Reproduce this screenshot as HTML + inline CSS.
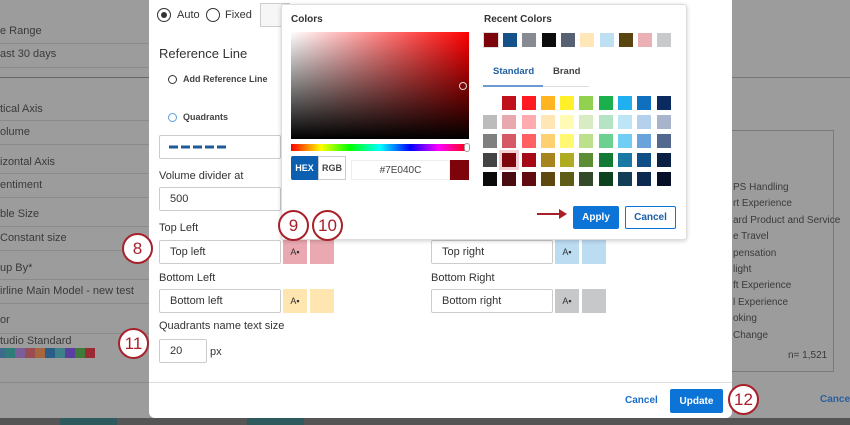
<!DOCTYPE html>
<html><head><meta charset="utf-8"><style>
*{box-sizing:border-box;margin:0;padding:0}
body{width:850px;height:425px;overflow:hidden;background:#9c9c9c;font-family:"Liberation Sans",sans-serif;position:relative;color:#333}
.a{position:absolute}
.t{position:absolute;font-size:11px;white-space:nowrap}
.g{color:#3a3a3a}
.hl{position:absolute;height:1px;background:#8a8a8a}
.inp{position:absolute;background:#fff;border:1px solid #ccc;border-radius:2px;font-size:11px;padding-left:10px;display:flex;align-items:center;color:#333}
.circ{position:absolute;width:31px;height:31px;border-radius:50%;border:2.5px solid #a8202a;background:#fff;color:#a8202a;font-size:17px;display:flex;align-items:center;justify-content:center}
.sw{position:absolute;width:14px;height:14px}
.btn{position:absolute;width:24px;height:24px;font-size:9px;display:flex;align-items:center;justify-content:center;color:#333}
</style></head><body>
<div class="t g" style="left:0;top:25px">e Range</div>
<div class="hl" style="left:0;top:43px;width:149px"></div>
<div class="t g" style="left:0;top:48px">ast 30 days</div>
<div class="hl" style="left:0;top:67px;width:149px"></div>
<div class="hl" style="left:0;top:77px;width:149px;background:#666"></div>
<div class="t g" style="left:0;top:103px">tical Axis</div>
<div class="hl" style="left:0;top:120px;width:149px"></div>
<div class="t g" style="left:0;top:126px">olume</div>
<div class="hl" style="left:0;top:144px;width:149px"></div>
<div class="t g" style="left:0;top:156px">izontal Axis</div>
<div class="hl" style="left:0;top:173px;width:149px"></div>
<div class="t g" style="left:0;top:179px">entiment</div>
<div class="hl" style="left:0;top:197px;width:149px"></div>
<div class="t g" style="left:0;top:208px">ble Size</div>
<div class="hl" style="left:0;top:226px;width:149px"></div>
<div class="t g" style="left:0;top:232px">Constant size</div>
<div class="hl" style="left:0;top:250px;width:149px"></div>
<div class="t g" style="left:0;top:262px">up By*</div>
<div class="hl" style="left:0;top:279px;width:149px"></div>
<div class="t g" style="left:0;top:285px">irline Main Model - new test</div>
<div class="hl" style="left:0;top:303px;width:149px"></div>
<div class="t g" style="left:0;top:314px">or</div>
<div class="hl" style="left:0;top:333px;width:149px"></div>
<div class="t g" style="left:0;top:335px">tudio Standard</div>
<div class="a" style="left:0;top:348px;display:flex">
<div style="width:5px;height:10px;background:#3e6a8a"></div><div style="width:10px;height:10px;background:#2e7b78"></div><div style="width:10px;height:10px;background:#7a5e9a"></div><div style="width:10px;height:10px;background:#9a4c52"></div><div style="width:10px;height:10px;background:#a8663e"></div><div style="width:10px;height:10px;background:#2a5e86"></div><div style="width:10px;height:10px;background:#3e8088"></div><div style="width:10px;height:10px;background:#5a3ea0"></div><div style="width:10px;height:10px;background:#3e7a3a"></div><div style="width:10px;height:10px;background:#9a2a34"></div></div>
<div class="hl" style="left:0;top:382px;width:149px"></div>
<div class="hl" style="left:732px;top:77px;width:118px;background:#777"></div>
<div class="a" style="left:700px;top:130px;width:134px;height:242px;border:1px solid #7a7a7a"></div>
<div class="a" style="left:733px;top:180px;font-size:10px;line-height:16.4px;color:#3a3a3a">PS Handling<br>rt Experience<br>ard Product and Service<br>e Travel<br>pensation<br>light<br>ft Experience<br>l Experience<br>oking<br>Change</div>
<div class="t g" style="left:788px;top:350px;font-size:10px">n= 1,521</div>
<div class="t" style="left:820px;top:394px;color:#2a5ea0;font-weight:bold;font-size:10px">Cancel</div>
<div class="a" style="left:0;top:418px;width:850px;height:7px;background:#555"></div>
<div class="a" style="left:60px;top:418px;width:57px;height:7px;background:#2e5a5e"></div>
<div class="a" style="left:247px;top:418px;width:57px;height:7px;background:#2e5a5e"></div>
<div class="a" style="left:149px;top:0;width:583px;height:418px;background:#fff;border-radius:0 0 6px 6px"></div>
<div class="a" style="left:157px;top:8px;width:14px;height:14px;border-radius:50%;border:1.5px solid #333"></div>
<div class="a" style="left:161px;top:12px;width:6px;height:6px;border-radius:50%;background:#333"></div>
<div class="t" style="left:177px;top:9px">Auto</div>
<div class="a" style="left:206px;top:8px;width:14px;height:14px;border-radius:50%;border:1.5px solid #333"></div>
<div class="t" style="left:225px;top:9px">Fixed</div>
<div class="a" style="left:260px;top:3px;width:30px;height:24px;border:1px solid #ccc;background:#f6f6f6"></div>
<div class="t" style="left:159px;top:46px;font-size:13px">Reference Line</div>
<div class="a" style="left:168px;top:75px;width:9px;height:9px;border-radius:50%;border:1px solid #333"></div>
<div class="t" style="left:183px;top:74px;font-size:9px;font-weight:bold;color:#444">Add Reference Line</div>
<div class="a" style="left:168px;top:113px;width:9px;height:9px;border-radius:50%;border:1px solid #5aa0e0"></div>
<div class="t" style="left:183px;top:112px;font-size:9px;font-weight:bold;color:#444">Quadrants</div>
<div class="inp" style="left:159px;top:135px;width:122px;height:24px;padding-left:9px"><svg width="60" height="4"><line x1="0" y1="2" x2="60" y2="2" stroke="#1f5a96" stroke-width="3" stroke-dasharray="9,3"/></svg></div>
<div class="t" style="left:159px;top:170px">Volume divider at</div>
<div class="inp" style="left:159px;top:187px;width:122px;height:24px">500</div>
<div class="t" style="left:159px;top:222px">Top Left</div>
<div class="inp" style="left:159px;top:240px;width:122px;height:24px">Top left</div>
<div class="btn" style="left:283px;top:240px;background:#eaa8b0">A▪</div>
<div class="a" style="left:310px;top:240px;width:24px;height:24px;background:#eaa8b0"></div>
<div class="t" style="left:159px;top:272px">Bottom Left</div>
<div class="inp" style="left:159px;top:289px;width:122px;height:24px">Bottom left</div>
<div class="btn" style="left:283px;top:289px;background:#ffe5b0">A▪</div>
<div class="a" style="left:310px;top:289px;width:24px;height:24px;background:#ffe5b0"></div>
<div class="t" style="left:159px;top:320px">Quadrants name text size</div>
<div class="inp" style="left:159px;top:339px;width:48px;height:24px">20</div>
<div class="t" style="left:210px;top:346px">px</div>
<div class="t" style="left:431px;top:272px">Bottom Right</div>
<div class="inp" style="left:431px;top:240px;width:122px;height:24px">Top right</div>
<div class="btn" style="left:555px;top:240px;background:#bcdcf2">A▪</div>
<div class="a" style="left:582px;top:240px;width:24px;height:24px;background:#bcdcf2"></div>
<div class="inp" style="left:431px;top:289px;width:122px;height:24px">Bottom right</div>
<div class="btn" style="left:555px;top:289px;background:#c6c8ca">A▪</div>
<div class="a" style="left:582px;top:289px;width:24px;height:24px;background:#c6c8ca"></div>
<div class="a" style="left:149px;top:382px;width:583px;height:1px;background:#ddd"></div>
<div class="t" style="left:625px;top:395px;color:#1a6ec8;font-weight:bold;font-size:10px">Cancel</div>
<div class="a" style="left:670px;top:389px;width:53px;height:24px;background:#0b74d6;border-radius:2px;color:#fff;font-size:10px;font-weight:bold;display:flex;align-items:center;justify-content:center">Update</div>
<div class="a" style="left:281px;top:4px;width:406px;height:236px;background:#fff;border:1px solid #ddd;border-radius:3px;box-shadow:0 1px 4px rgba(0,0,0,.2)"></div>
<div class="t" style="left:291px;top:14px;font-size:10px;font-weight:bold">Colors</div>
<div class="a" style="left:291px;top:32px;width:178px;height:107px;background:linear-gradient(to top,#000,rgba(0,0,0,0)),linear-gradient(to right,#fff,#f00)"></div>
<div class="a" style="left:459px;top:82px;width:8px;height:8px;border-radius:50%;border:1px solid #ddd"></div>
<div class="a" style="left:291px;top:144px;width:178px;height:7px;background:linear-gradient(to right,#f00,#ff0 17%,#0f0 33%,#0ff 50%,#00f 67%,#f0f 83%,#f00)"></div>
<div class="a" style="left:464px;top:143px;width:6px;height:9px;border-radius:3px;background:#fff;border:1px solid #999"></div>
<div class="a" style="left:291px;top:156px;width:27px;height:24px;background:#0b5fb0;color:#fff;font-size:9px;font-weight:bold;display:flex;align-items:center;justify-content:center;border-radius:2px 0 0 2px">HEX</div>
<div class="a" style="left:318px;top:156px;width:28px;height:24px;border:1px solid #ccc;font-size:9px;font-weight:bold;display:flex;align-items:center;justify-content:center;color:#444">RGB</div>
<div class="a" style="left:351px;top:160px;width:99px;height:20px;border:1px solid #eee;font-size:10px;display:flex;align-items:center;justify-content:center;color:#444">#7E040C</div>
<div class="a" style="left:450px;top:160px;width:19px;height:20px;background:#7e040c"></div>
<div class="t" style="left:484px;top:14px;font-size:10px;font-weight:bold">Recent Colors</div>
<div class="sw" style="left:484px;top:33px;background:#7e040c;outline:1px solid #ddd"></div>
<div class="sw" style="left:503px;top:33px;background:#165289"></div>
<div class="sw" style="left:522px;top:33px;background:#878a90"></div>
<div class="sw" style="left:542px;top:33px;background:#0c0c0c"></div>
<div class="sw" style="left:561px;top:33px;background:#566171"></div>
<div class="sw" style="left:580px;top:33px;background:#ffe7ba"></div>
<div class="sw" style="left:600px;top:33px;background:#bfdff2"></div>
<div class="sw" style="left:619px;top:33px;background:#5a4410"></div>
<div class="sw" style="left:638px;top:33px;background:#ebb0b6"></div>
<div class="sw" style="left:657px;top:33px;background:#c8c9cb"></div>
<div class="t" style="left:493px;top:66px;font-size:9.5px;font-weight:bold;color:#1f5fa0">Standard</div>
<div class="t" style="left:553px;top:66px;font-size:9.5px;font-weight:bold;color:#444">Brand</div>
<div class="a" style="left:483px;top:86px;width:106px;height:1px;background:#ddd"></div>
<div class="a" style="left:483px;top:85px;width:60px;height:2px;background:#6a9ad0"></div>
<div class="a" style="left:483px;top:96px;display:grid;grid-template-columns:repeat(10,14px);column-gap:5.3px;row-gap:5px">
<div></div><div style="height:14px;background:#c0101c"></div><div style="background:#ff1a22"></div><div style="background:#ffb422"></div><div style="background:#fff02a"></div><div style="background:#92d050"></div><div style="background:#1bb04c"></div><div style="background:#20b0f0"></div><div style="background:#1070c0"></div><div style="background:#0a2a60"></div>
<div style="height:14px;background:#bcbcbc"></div><div style="background:#e8a8ae"></div><div style="background:#ffaaae"></div><div style="background:#ffe6b4"></div><div style="background:#fffab4"></div><div style="background:#d8ecc4"></div><div style="background:#b4e4c4"></div><div style="background:#bce6f8"></div><div style="background:#b4d0ec"></div><div style="background:#a8b4cc"></div>
<div style="height:14px;background:#808080"></div><div style="background:#d65a66"></div><div style="background:#ff6064"></div><div style="background:#ffd070"></div><div style="background:#fff870"></div><div style="background:#bce08c"></div><div style="background:#6cd090"></div><div style="background:#70cef4"></div><div style="background:#6aa2dc"></div><div style="background:#52688e"></div>
<div style="height:14px;background:#444"></div><div style="background:#7e040c;outline:3px solid #f2d0d4"></div><div style="background:#a60a16"></div><div style="background:#a88420"></div><div style="background:#b0ac20"></div><div style="background:#5c8c34"></div><div style="background:#137a36"></div><div style="background:#1a78a4"></div><div style="background:#104e86"></div><div style="background:#0a2044"></div>
<div style="height:14px;background:#0a0a0a"></div><div style="background:#4a0c10"></div><div style="background:#600a12"></div><div style="background:#5e4810"></div><div style="background:#5e5c16"></div><div style="background:#34482a"></div><div style="background:#0c4220"></div><div style="background:#123e58"></div><div style="background:#0c2a50"></div><div style="background:#060f28"></div>
</div>
<div class="a" style="left:537px;top:213px;width:24px;height:2px;background:#a8202a"></div>
<div class="a" style="left:559px;top:209px;width:0;height:0;border-left:8px solid #a8202a;border-top:5px solid transparent;border-bottom:5px solid transparent"></div>
<div class="a" style="left:573px;top:206px;width:46px;height:23px;background:#0b74d6;border-radius:2px;color:#fff;font-size:10px;font-weight:bold;display:flex;align-items:center;justify-content:center">Apply</div>
<div class="a" style="left:625px;top:206px;width:51px;height:23px;border:1px solid #0b74d6;border-radius:2px;color:#1a5ea8;font-size:10px;font-weight:bold;display:flex;align-items:center;justify-content:center">Cancel</div>
<div class="circ" style="left:122px;top:233px">8</div>
<div class="circ" style="left:278px;top:210px">9</div>
<div class="circ" style="left:312px;top:210px">10</div>
<div class="circ" style="left:118px;top:328px">11</div>
<div class="circ" style="left:728px;top:384px">12</div>
</body></html>
